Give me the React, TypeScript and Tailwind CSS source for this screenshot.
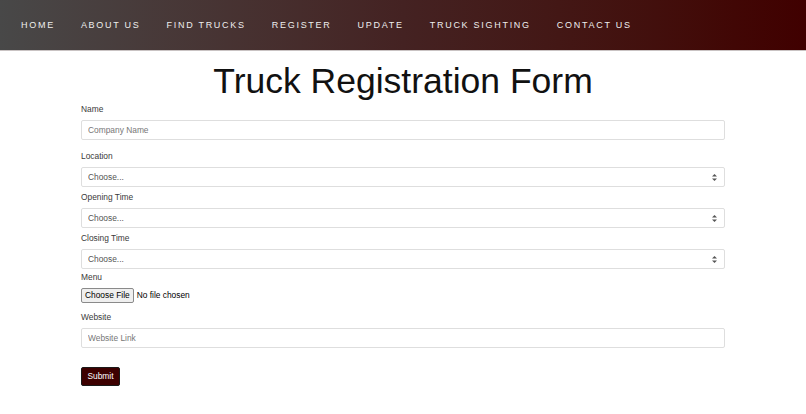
import React from "react";

const navItems = ["HOME", "ABOUT US", "FIND TRUCKS", "REGISTER", "UPDATE", "TRUCK SIGHTING", "CONTACT US"];

function Label({ children, className = "" }: { children: React.ReactNode; className?: string }) {
  return <label className={`block h-3 leading-3 text-[8.4px] text-[#3a3a3a] ${className}`}>{children}</label>;
}

function TextInput({ placeholder }: { placeholder: string }) {
  return (
    <input
      type="text"
      placeholder={placeholder}
      className="mt-[5px] block h-5 w-full rounded-[2px] border border-[#dedede] bg-white px-[6px] text-[8.4px] text-[#333] placeholder:text-[#777] outline-none"
    />
  );
}

function Select() {
  return (
    <div className="relative mt-[5px] h-5 w-full">
      <select className="block h-5 w-full appearance-none rounded-[2px] border border-[#dedede] bg-white px-[6px] text-[8.4px] text-[#555] outline-none">
        <option>Choose...</option>
      </select>
      {/* up/down caret */}
      <svg className="pointer-events-none absolute right-[8px] top-[7px]" width="5" height="7" viewBox="0 0 5 7">
        <path d="M2.5 0 L5 2.6 H0 Z" fill="#555" />
        <path d="M2.5 7 L5 4.4 H0 Z" fill="#555" />
      </svg>
    </div>
  );
}

export default function App() {
  return (
    <div className="min-h-[414px] bg-white font-['Liberation_Sans',Arial,sans-serif]">
      {/* Navbar */}
      <nav className="flex h-[51px] items-center gap-[26px] border-b border-[#c9c3c3] bg-gradient-to-r from-[#484848] via-[#442222] to-[#400000] pl-[21px] pt-[1px]">
        {navItems.map((item) => (
          <a key={item} href="#" className="text-[9px] tracking-[1.72px] text-[#eeeeee]">
            {item}
          </a>
        ))}
      </nav>

      <h1 className="mt-[8px] h-[44px] text-center text-[35.5px] leading-[44px] text-[#111]">Truck Registration Form</h1>

      <form className="ml-[81px] w-[644px]" onSubmit={(e) => e.preventDefault()}>
        <Label>Name</Label>
        <TextInput placeholder="Company Name" />

        <Label className="mt-[10px]">Location</Label>
        <Select />

        <Label className="mt-[4px]">Opening Time</Label>
        <Select />

        <Label className="mt-[4px]">Closing Time</Label>
        <Select />

        <Label className="mt-[2px]">Menu</Label>
        <div className="mt-[5px] flex h-[15px] items-center gap-[3px]">
          <span className="flex h-[15px] items-center rounded-[2px] border border-[#8a8a8a] bg-[#efefef] px-[3px] text-[8.4px] text-black">
            Choose File
          </span>
          <span className="text-[8.4px] text-black">No file chosen</span>
        </div>

        <Label className="mt-[8px]">Website</Label>
        <TextInput placeholder="Website Link" />

        <button
          type="submit"
          className="mt-[19px] block h-[19px] w-[39px] rounded-[2px] border border-[#1a1a1a] bg-[#3d0000] text-[8.4px] text-white"
        >
          Submit
        </button>
      </form>
    </div>
  );
}
